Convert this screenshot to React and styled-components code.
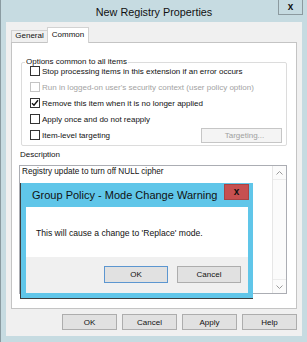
import React from 'react';
import styled, { createGlobalStyle } from 'styled-components';

const OPTIONS = [
  { label: 'Stop processing items in this extension if an error occurs' },
  { label: "Run in logged-on user's security context (user policy option)", disabled: true },
  { label: 'Remove this item when it is no longer applied', checked: true },
  { label: 'Apply once and do not reapply' },
  { label: 'Item-level targeting', targeting: true },
];

const BUTTONS = ['OK', 'Cancel', 'Apply', 'Help'];

const GlobalStyle = createGlobalStyle`
  * {
    box-sizing: border-box;
  }
  body {
    margin: 0;
    font-family: 'Liberation Sans', Arial, sans-serif;
    background: #ffffff;
  }
`;

const Window = styled.div`
  position: relative;
  width: 307px;
  height: 342px;
  display: flex;
  flex-direction: column;
  background-color: #c6dbe1;
  border-left: 1px solid #8a9ba1;
  overflow: hidden;
`;

const TitleBar = styled.div`
  height: 22px;
  display: grid;
  flex-shrink: 0;
`;

const Title = styled.div`
  grid-area: 1 / 1;
  justify-self: center;
  align-self: center;
  padding-top: 1px;
  font-size: 10.8px;
  color: #111;
`;

const CloseBox = styled.div`
  grid-area: 1 / 1;
  justify-self: end;
  align-self: start;
  width: 25px;
  height: 15px;
  margin-right: 4px;
  border: 1px solid #8c9a9f;
  border-top: none;
  display: flex;
  align-items: center;
  justify-content: center;
  font-size: 10px;
  font-weight: bold;
  color: #111;
  line-height: 1;
`;

const Client = styled.div`
  flex: 1;
  margin: 0 5px 6px 5px;
  padding: 5px 5px 6px;
  background-color: #f0f0f0;
  display: flex;
  flex-direction: column;
`;

const TabStrip = styled.div`
  height: 15px;
  display: flex;
  align-items: flex-end;
  flex-shrink: 0;
`;

const Tab = styled.div`
  position: relative;
  z-index: ${(p) => (p.$active ? 1 : 0)};
  width: ${(p) => (p.$active ? 42 : 37)}px;
  height: ${(p) => (p.$active ? 16 : 12)}px;
  margin-bottom: ${(p) => (p.$active ? -1 : 0)}px;
  margin-left: ${(p) => (p.$active ? -1 : 0)}px;
  border: 1px solid #d2d2d2;
  border-bottom: none;
  background-color: ${(p) => (p.$active ? '#ffffff' : '#f0f0f0')};
  font-size: 8px;
  line-height: ${(p) => (p.$active ? 14 : 10)}px;
  text-align: center;
  color: #111;
`;

const Panel = styled.div`
  height: 267px;
  flex-shrink: 0;
  border: 1px solid #c4c4c4;
  background-color: #ffffff;
  padding: 0 9px;
  display: flex;
  flex-direction: column;
`;

const Group = styled.div`
  margin-top: 19px;
  height: 84px;
  border: 1px solid #dcdcdc;
  border-radius: 2px;
`;

const GroupTitle = styled.div`
  width: fit-content;
  margin: -6px 0 -4px 3px;
  padding: 0 1px;
  background-color: #ffffff;
  font-size: 8px;
  line-height: 10px;
  color: #111;
`;

const Rows = styled.div`
  padding: 0 4px 0 8px;
`;

const Row = styled.div`
  height: 16px;
  display: flex;
  align-items: center;
  gap: 2px;
  font-size: 8px;
  color: ${(p) => (p.$disabled ? '#a3a3a3' : '#111')};
`;

const CheckBox = styled.span`
  width: 10px;
  height: 10px;
  flex-shrink: 0;
  border: 1px solid ${(p) => (p.$disabled ? '#c4c4c4' : '#333333')};
  background-color: #ffffff;
  display: flex;
  align-items: center;
  justify-content: center;
`;

const TargetButton = styled.div`
  margin-left: auto;
  width: 81px;
  height: 15px;
  border: 1px solid #c6c6c6;
  background-color: #f4f4f4;
  color: #a0a0a0;
  font-size: 8px;
  display: flex;
  align-items: center;
  justify-content: center;
  padding-left: 6px;
`;

const FieldLabel = styled.div`
  margin: 4px 0 0 -1px;
  font-size: 8px;
  line-height: 10px;
  color: #111;
`;

const TextBox = styled.div`
  margin: 5px 0 0 -2px;
  height: 129px;
  border: 1px solid #abadb3;
  display: flex;
`;

const TextValue = styled.div`
  flex: 1;
  padding: 0 2px;
  font-size: 8.2px;
  line-height: 12px;
  color: #111;
`;

const ScrollBar = styled.div`
  width: 14px;
  display: flex;
  flex-direction: column;
  justify-content: space-between;
  background-color: #fbfbfb;
  border-left: 1px solid #e6e6e6;
`;

const ScrollArrow = styled.div`
  height: 14px;
  display: flex;
  align-items: center;
  justify-content: center;
  border-${(p) => (p.$down ? 'top' : 'bottom')}: 1px solid #ececec;
`;

const ButtonRow = styled.div`
  margin-top: 5px;
  height: 16px;
  display: flex;
  justify-content: flex-end;
  gap: 5px;
`;

const Button = styled.div`
  width: ${(p) => p.$width || 55}px;
  height: ${(p) => p.$height || 16}px;
  border: 1px solid ${(p) => (p.$default ? '#5c96d0' : '#adadad')};
  background-color: #e1e1e1;
  font-size: 8px;
  color: #111;
  display: flex;
  align-items: center;
  justify-content: center;
`;

const Dialog = styled.div`
  position: absolute;
  left: 19px;
  top: 183px;
  width: 233px;
  height: 116px;
  background-color: #60c6e9;
  border-left: 1px solid #3d3d3d;
  border-bottom: 1px solid #3d3d3d;
  padding: 0 5px 5px;
  display: flex;
  flex-direction: column;
`;

const DialogTitleBar = styled.div`
  height: 24px;
  display: grid;
  flex-shrink: 0;
`;

const DialogTitle = styled.div`
  grid-area: 1 / 1;
  align-self: center;
  padding-left: 6px;
  font-size: 11px;
  color: #111;
`;

const DialogClose = styled.div`
  grid-area: 1 / 1;
  justify-self: end;
  align-self: start;
  width: 25px;
  height: 16px;
  margin: 1px -1px 0 0;
  background-color: #c75050;
  border: 1px solid #a84444;
  display: flex;
  align-items: center;
  justify-content: center;
  font-size: 10px;
  font-weight: bold;
  color: #111;
  line-height: 1;
`;

const DialogMessage = styled.div`
  height: 50px;
  flex-shrink: 0;
  padding: 1px 0 0 10px;
  background-color: #ffffff;
  display: flex;
  align-items: center;
  font-size: 8.6px;
  color: #111;
`;

const DialogFooter = styled.div`
  flex: 1;
  background-color: #f0f0f0;
  display: flex;
  justify-content: flex-end;
  align-items: flex-start;
  gap: 9px;
  padding: 9px 7px 0 0;
`;

const Check = () => (
  <svg width="8" height="8" viewBox="0 0 8 8">
    <path d="M1 4.2 L3 6.3 L7 1.3" fill="none" stroke="#111" strokeWidth="1.4" />
  </svg>
);

const Chevron = ({ down }) => (
  <svg width="7" height="4" viewBox="0 0 7 4">
    <path
      d={down ? 'M0.5 0.5 L3.5 3.5 L6.5 0.5' : 'M0.5 3.5 L3.5 0.5 L6.5 3.5'}
      fill="none"
      stroke="#9a9a9a"
      strokeWidth="1"
    />
  </svg>
);

export default function App() {
  return (
    <>
      <GlobalStyle />
      <Window>
        <TitleBar>
          <Title>New Registry Properties</Title>
          <CloseBox>x</CloseBox>
        </TitleBar>

        <Client>
          <TabStrip>
            <Tab>General</Tab>
            <Tab $active>Common</Tab>
          </TabStrip>

          <Panel>
            <Group>
              <GroupTitle>Options common to all items</GroupTitle>
              <Rows>
                {OPTIONS.map((item) => (
                  <Row key={item.label} $disabled={item.disabled}>
                    <CheckBox $disabled={item.disabled}>{item.checked && <Check />}</CheckBox>
                    <span>{item.label}</span>
                    {item.targeting && <TargetButton>Targeting...</TargetButton>}
                  </Row>
                ))}
              </Rows>
            </Group>

            <FieldLabel>Description</FieldLabel>
            <TextBox>
              <TextValue>Registry update to turn off NULL cipher</TextValue>
              <ScrollBar>
                <ScrollArrow>
                  <Chevron />
                </ScrollArrow>
                <ScrollArrow $down>
                  <Chevron down />
                </ScrollArrow>
              </ScrollBar>
            </TextBox>
          </Panel>

          <ButtonRow>
            {BUTTONS.map((name) => (
              <Button key={name}>{name}</Button>
            ))}
          </ButtonRow>
        </Client>

        <Dialog>
          <DialogTitleBar>
            <DialogTitle>Group Policy - Mode Change Warning</DialogTitle>
            <DialogClose>x</DialogClose>
          </DialogTitleBar>
          <DialogMessage>This will cause a change to 'Replace' mode.</DialogMessage>
          <DialogFooter>
            <Button $default $width={64} $height={17}>
              OK
            </Button>
            <Button $width={64} $height={17}>
              Cancel
            </Button>
          </DialogFooter>
        </Dialog>
      </Window>
    </>
  );
}
